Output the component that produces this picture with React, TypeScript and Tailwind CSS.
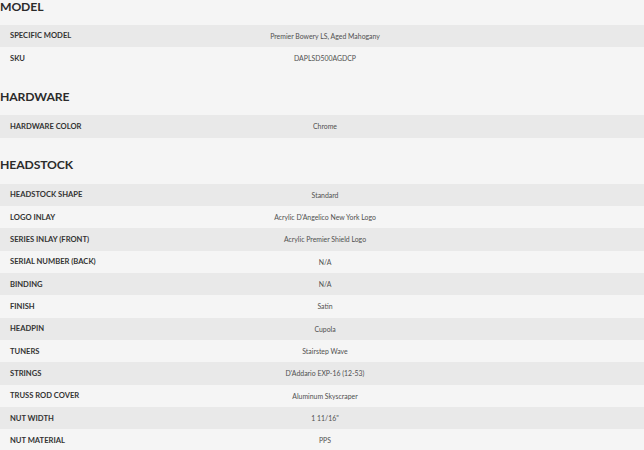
const sections: { title: string; rows: [string, string][] }[] = [
  {
    title: 'Model',
    rows: [
      ['Specific Model', 'Premier Bowery LS, Aged Mahogany'],
      ['SKU', 'DAPLSD500AGDCP'],
    ],
  },
  {
    title: 'Hardware',
    rows: [['Hardware Color', 'Chrome']],
  },
  {
    title: 'Headstock',
    rows: [
      ['Headstock Shape', 'Standard'],
      ['Logo Inlay', "Acrylic D'Angelico New York Logo"],
      ['Series Inlay (Front)', 'Acrylic Premier Shield Logo'],
      ['Serial Number (Back)', 'N/A'],
      ['Binding', 'N/A'],
      ['Finish', 'Satin'],
      ['Headpin', 'Cupola'],
      ['Tuners', 'Stairstep Wave'],
      ['Strings', "D'Addario EXP-16 (12-53)"],
      ['Truss Rod Cover', 'Aluminum Skyscraper'],
      ['Nut Width', '1 11/16"'],
      ['Nut Material', 'PPS'],
    ],
  },
];

export default function App() {
  return (
    <div
      className="min-h-screen w-full bg-[#f5f5f5] overflow-hidden"
      style={{ fontFamily: 'Lato, "Open Sans", sans-serif' }}
    >
      <div className="-mt-[1.5px]">
        {sections.map((section, i) => (
          <section key={section.title} className={i === 0 ? '' : 'mt-[19.7px]'}>
            {/* Section heading */}
            <h2 className="text-[12.2px] leading-[16px] font-bold uppercase text-[#2b2b2b] tracking-[-0.01em] mb-[10.3px]">
              {section.title}
            </h2>

            {/* Spec rows */}
            <div>
              {section.rows.map(([label, value], j) => (
                <div
                  key={label}
                  className={`flex items-center h-[22.33px] ${j % 2 === 0 ? 'bg-[#e9e9e9]' : ''}`}
                >
                  <div className="w-[200px] pl-[10px] text-[7.6px] font-bold uppercase text-[#333333]">
                    {label}
                  </div>
                  <div className="w-[250px] text-center text-[6.9px] text-[#505050]">
                    {value}
                  </div>
                </div>
              ))}
            </div>
          </section>
        ))}
      </div>
    </div>
  );
}
